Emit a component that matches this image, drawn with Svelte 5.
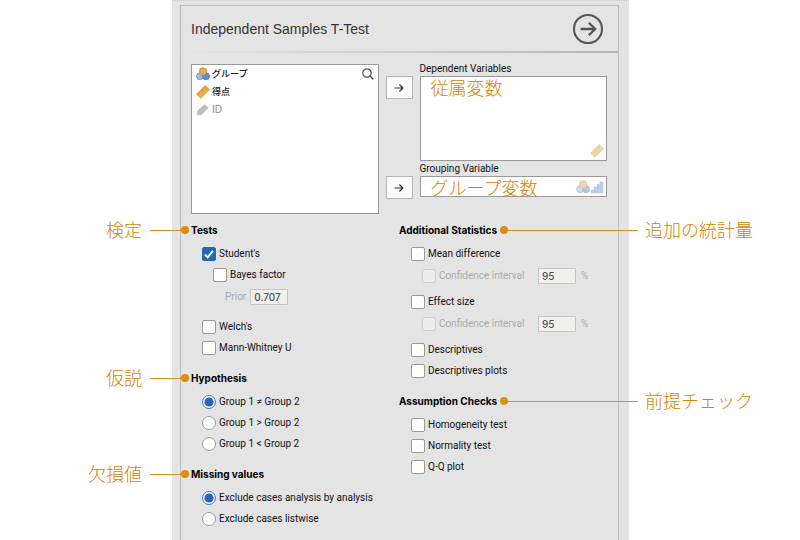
<script>
  let tests = $state({ student: true, bayes: false, welch: false, mann: false });
  let prior = $state('0.707');
  let hypothesis = $state('ne');
  let missing = $state('analysis');
  let stats = $state([
    { label: 'Mean difference', on: false, interval: true, ci: false, level: '95' },
    { label: 'Effect size', on: false, interval: true, ci: false, level: '95' },
    { label: 'Descriptives', on: false },
    { label: 'Descriptives plots', on: false }
  ]);
  let checks = $state([
    { label: 'Homogeneity test', on: false },
    { label: 'Normality test', on: false },
    { label: 'Q-Q plot', on: false }
  ]);
  const hypotheses = [
    { value: 'ne', label: 'Group 1 ≠ Group 2' },
    { value: 'gt', label: 'Group 1 > Group 2' },
    { value: 'lt', label: 'Group 1 < Group 2' }
  ];
  const missingOptions = [
    { value: 'analysis', label: 'Exclude cases analysis by analysis' },
    { value: 'listwise', label: 'Exclude cases listwise' }
  ];
</script>

{#snippet nominal()}
  <svg class="icon" viewBox="0 0 14 14" aria-hidden="true">
    <circle cx="4" cy="9.3" r="3.5" fill="#9dbdec" stroke="#4f7fca" stroke-width=".7" />
    <circle cx="10" cy="9.3" r="3.5" fill="#5b8edb" stroke="#3f6fbd" stroke-width=".7" />
    <circle cx="7" cy="4.5" r="3.8" fill="#e0ac55" stroke="#c08a35" stroke-width=".7" />
  </svg>
{/snippet}

{#snippet ruler()}
  <svg class="icon" viewBox="0 0 14 14" aria-hidden="true">
    <path d="M9.2.6 13.5 4.6 4.9 13.3.5 9.2z" fill="#e8ac4c" stroke="#d3963a" stroke-width=".7" stroke-linejoin="round" />
    <path d="M2.7 7.3l1.3 1.2M4.5 5.5l1.9 1.8M6.2 3.8l1.3 1.2M7.9 2.1l1.9 1.8" stroke="#b97b1e" stroke-width=".6" />
  </svg>
{/snippet}

{#snippet tag()}
  <svg class="icon" viewBox="0 0 14 14" aria-hidden="true">
    <path d="M1.2 12.3V8L8 1.7q.6-.5 1.2 0l2.7 2.5q.6.6 0 1.2L5.4 12q-.3.3-.7.3z" fill="#bcbcbc" />
    <circle cx="2.9" cy="10.7" r=".5" fill="#fff" />
  </svg>
{/snippet}

{#snippet arrow()}
  <svg class="arrow" viewBox="0 0 10 10" aria-hidden="true">
    <path d="M.7 5h8M5.4 1.5 8.9 5 5.4 8.5" fill="none" stroke="#333" stroke-width="1.2" />
  </svg>
{/snippet}

<main class="page">
  <div class="panel">
    <form class="frame" onsubmit={(e) => e.preventDefault()}>
      <header>
        <h1>Independent Samples T-Test</h1>
        <button class="run" type="button" aria-label="Close options">
          <svg viewBox="0 0 32 32" aria-hidden="true">
            <circle cx="16" cy="16" r="14" fill="none" stroke="#555" stroke-width="2.1" />
            <path d="M8.5 16h14M16.8 9.7 23.2 16l-6.4 6.3" fill="none" stroke="#555" stroke-width="2.3" />
          </svg>
        </button>
      </header>

      <div class="transfer">
        <div class="supplier">
          <ul>
            <li>{@render nominal()}グループ</li>
            <li>{@render ruler()}得点</li>
            <li class="muted">{@render tag()}ID</li>
          </ul>
          <button class="search" type="button" aria-label="Search">
            <svg viewBox="0 0 12 12" aria-hidden="true">
              <circle cx="5" cy="5" r="4.2" fill="none" stroke="#555" stroke-width="1.2" />
              <path d="M8 8l3.4 3.4" stroke="#555" stroke-width="1.5" />
            </svg>
          </button>
        </div>
        <button class="move first" type="button" aria-label="Assign dependent variable">{@render arrow()}</button>
        <button class="move second" type="button" aria-label="Assign grouping variable">{@render arrow()}</button>
        <h2 class="name dep">Dependent Variables</h2>
        <div class="target dep-box">
          <span class="note">従属変数</span>
          <span class="kinds">{@render ruler()}</span>
        </div>
        <h2 class="name grp">Grouping Variable</h2>
        <div class="target grp-box">
          <span class="note">グループ変数</span>
          <span class="kinds">
            {@render nominal()}
            <svg class="icon" viewBox="0 0 14 14" aria-hidden="true">
              <path d="M1 10h2.5v3H1zM4 7h2.5v6H4zM7 4.5h2.5V13H7zM10 2h3v11h-3z" fill="#6e9de0" stroke="#5a8ad2" stroke-width=".5" />
            </svg>
          </span>
        </div>
      </div>

      <div class="options">
        <div class="column">
          <section>
            <h3>Tests<span class="callout left">検定</span></h3>
            <label class="row"><input type="checkbox" bind:checked={tests.student} />Student's</label>
            <label class="row sub"><input type="checkbox" bind:checked={tests.bayes} />Bayes factor</label>
            <div class="row prior muted">
              <label for="prior">Prior</label>
              <input id="prior" type="text" disabled bind:value={prior} />
            </div>
            <label class="row"><input type="checkbox" bind:checked={tests.welch} />Welch's</label>
            <label class="row"><input type="checkbox" bind:checked={tests.mann} />Mann-Whitney U</label>
          </section>
          <section>
            <h3>Hypothesis<span class="callout left">仮説</span></h3>
            {#each hypotheses as h}
              <label class="row"><input type="radio" name="hypothesis" value={h.value} bind:group={hypothesis} />{h.label}</label>
            {/each}
          </section>
          <section>
            <h3>Missing values<span class="callout left">欠損値</span></h3>
            {#each missingOptions as m}
              <label class="row"><input type="radio" name="missing" value={m.value} bind:group={missing} />{m.label}</label>
            {/each}
          </section>
        </div>

        <div class="column">
          <section>
            <h3>Additional Statistics<span class="callout right">追加の統計量</span></h3>
            {#each stats as s}
              <label class="row"><input type="checkbox" bind:checked={s.on} />{s.label}</label>
              {#if s.interval}
                <div class="row sub interval muted">
                  <label><input type="checkbox" disabled={!s.on} bind:checked={s.ci} />Confidence interval</label>
                  <input type="text" aria-label="{s.label} confidence level" disabled={!s.on} bind:value={s.level} />
                  <span>%</span>
                </div>
              {/if}
            {/each}
          </section>
          <section>
            <h3>Assumption Checks<span class="callout right">前提チェック</span></h3>
            {#each checks as c}
              <label class="row"><input type="checkbox" bind:checked={c.on} />{c.label}</label>
            {/each}
          </section>
        </div>
      </div>
    </form>
  </div>
</main>

<style>
  :global(body) { background: #fff; }
  .page {
    box-sizing: border-box;
    min-height: 100vh;
    display: flex;
    padding: 0 171px 0 172px;
    overflow: hidden;
    font: 400 10px/12px Roboto, "Noto Sans CJK JP", sans-serif;
    color: #111;
  }
  .page *, .page *::before, .page *::after { box-sizing: border-box; }
  h1, h2, h3, ul { margin: 0; padding: 0; }
  button { padding: 0; border: 0; background: none; display: flex; align-items: center; justify-content: center; }
  .panel {
    flex: 1;
    min-width: 0;
    display: flex;
    padding: 4px 10px 0 8px;
    background: #e4e4e4;
    border-top: 1px solid #d8d8d8;
  }
  .frame {
    flex: 1;
    min-width: 0;
    border: 1px solid #bdbdbd;
    border-bottom: 0;
  }
  header {
    display: flex;
    align-items: center;
    justify-content: space-between;
    height: 47px;
    padding: 0 14px 0 10px;
    border-bottom: 2px solid;
    border-image: linear-gradient(to right, #e4e4e4, #b4b4b4) 1;
  }
  h1 { font: 14px/20px "Liberation Sans", sans-serif; color: #333; }
  .run svg { display: block; width: 32px; height: 32px; }

  .transfer {
    display: grid;
    grid-template-columns: 1fr 27px 1fr;
    grid-template-rows: 12px 85px 15px 23px 15px;
    column-gap: 7px;
    padding: 11px 11px 0 10px;
  }
  .supplier {
    grid-area: 1 / 1 / 6 / 2;
    display: flex;
    justify-content: space-between;
    align-items: flex-start;
    background: #fff;
    border: 1px solid #999;
  }
  .supplier ul { list-style: none; padding-left: 4px; }
  .supplier li { display: flex; align-items: center; gap: 2px; height: 18px; font-size: 9px; font-weight: 500; color: #222; }
  .supplier li.muted { font: 10px/12px "Liberation Sans", sans-serif; color: #888; }
  .icon { display: block; width: 14px; height: 14px; }
  .search { padding: 3px 4px; }
  .search svg { width: 12px; height: 12px; }
  .move { height: 23px; background: #fafafa; border: 1px solid #b5b5b5; }
  .move svg { width: 10px; height: 10px; }
  .first { grid-area: 2 / 2; }
  .second { grid-area: 4 / 2; }
  .name { font-size: 10px; font-weight: 400; line-height: 10px; white-space: nowrap; }
  .dep { grid-area: 1 / 3; }
  .grp { grid-area: 3 / 3; padding-top: 3px; }
  .target {
    display: flex;
    justify-content: space-between;
    background: #fff;
    border: 1px solid #999;
    padding: 0 2px 1px 10px;
  }
  .dep-box { grid-area: 2 / 3; }
  .grp-box { grid-area: 4 / 3; height: 21px; }
  .note, .callout { font: 300 18px/20px "Noto Sans CJK JP", sans-serif; color: #d68400; white-space: nowrap; }
  .kinds { display: flex; align-self: flex-end; opacity: .5; padding-bottom: 1px; }

  .options { display: grid; grid-template-columns: 1fr 1fr; padding: 6px 11px 11px 10px; }
  section + section { margin-top: 10px; }
  h3 { position: relative; font: 700 10px/20px Inter, sans-serif; color: #000; margin-bottom: 3px; }
  .row { display: flex; align-items: center; gap: 3px; height: 21px; padding-left: 11px; white-space: nowrap; }
  .row.sub { padding-left: 22px; }
  .row.prior { height: 24px; padding-left: 34px; gap: 4px; margin-bottom: 7px; }
  .row.interval { height: 24px; gap: 5px; margin-bottom: 3px; }
  .interval label { display: flex; align-items: center; gap: 3px; width: 111px; }
  .row.muted { color: #adadad; }
  .column + .column .row { padding-left: 12px; }
  .column + .column .row.sub { padding-left: 23px; }

  input[type='checkbox'], input[type='radio'] {
    appearance: none;
    flex: none;
    width: 14px;
    height: 14px;
    margin: 0;
    background: #fff;
    border: 1px solid #999;
    border-radius: 2px;
  }
  input[type='radio'] { border-radius: 50%; }
  input[type='checkbox']:checked {
    border-color: #2767b3;
    background: #2767b3 url("data:image/svg+xml,%3Csvg xmlns='http://www.w3.org/2000/svg' viewBox='0 0 12 12'%3E%3Cpath d='M2 6.5l2.7 2.8L10 2.8' fill='none' stroke='white' stroke-width='1.9'/%3E%3C/svg%3E");
  }
  input[type='radio']:checked {
    border-color: #3f7fca;
    background: radial-gradient(circle, #2767b3 0 4px, #fff 5px);
  }
  input[type='checkbox']:disabled { background: #ececea; border-color: #d0d0d0; }
  input[type='text'] {
    width: 38px;
    height: 16px;
    margin: 0;
    padding: 0 3px;
    font: 500 10px/12px Inter, sans-serif;
    color: #555;
    background: #efefed;
    border: 1px solid #c4c4c4;
    border-radius: 1px;
  }

  .callout { position: absolute; top: -1px; }
  .callout.left { right: calc(100% + 49px); }
  .callout.right { left: 246px; }
  .callout::before, .callout::after { content: ''; position: absolute; background: #db8d12; }
  .callout::before { top: 11px; height: 1px; }
  .callout::after { top: 7px; width: 8px; height: 8px; border-radius: 50%; }
  .callout.left::before { left: calc(100% + 8px); width: 36px; }
  .callout.left::after { left: calc(100% + 39px); }
  .callout.right::before { right: calc(100% + 7px); width: 134px; }
  .callout.right::after { right: calc(100% + 137px); }
</style>
